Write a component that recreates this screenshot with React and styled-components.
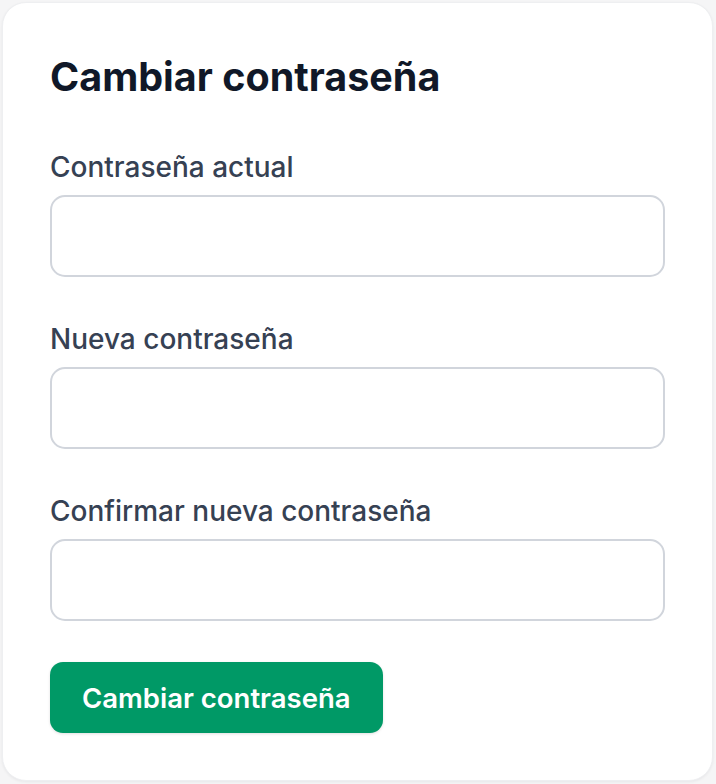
import React from "react";
import styled, { createGlobalStyle } from "styled-components";

const Global = createGlobalStyle`
  html, body { margin: 0; padding: 0; }
  body {
    background: #f5f5f6;
    font-family: Inter, "Noto Sans", sans-serif;
    -webkit-font-smoothing: antialiased;
  }
  * { box-sizing: border-box; }
`;

const Page = styled.div`
  padding: 2px 3px 3px 2px;
  width: 716px;
  height: 784px;
`;

const Card = styled.form`
  background: #ffffff;
  border-radius: 24px;
  border: 1px solid #eeeff1;
  box-shadow: 0 1px 3px rgba(16, 24, 40, 0.06);
  padding: 47px;
  height: 779px;
  display: flex;
  flex-direction: column;
`;

const Title = styled.h2`
  margin: 3px 0 48px;
  font-size: 39.5px;
  line-height: 48px;
  font-weight: 700;
  color: #101828;
`;

const Fields = styled.div`
  display: flex;
  flex-direction: column;
  gap: 44px;
`;

const Field = styled.div`
  display: flex;
  flex-direction: column;
  gap: 10px;
`;

const Label = styled.label`
  font-size: 28px;
  line-height: 36px;
  font-weight: 500;
  color: #364153;
`;

const Input = styled.input`
  height: 82px;
  width: 100%;
  border: 2px solid #d1d5dc;
  border-radius: 15px;
  background: #fff;
  padding: 0 20px;
  font-size: 24px;
  font-family: inherit;
  outline: none;
`;

const Button = styled.button`
  margin-top: 41px;
  align-self: flex-start;
  height: 71px;
  padding: 0 32px;
  border: none;
  border-radius: 13px;
  background: #009966;
  color: #ffffff;
  font-family: inherit;
  font-size: 27.5px;
  font-weight: 600;
  box-shadow: 0 1px 3px rgba(0, 0, 0, 0.12);
  cursor: pointer;
`;

const fields = [
  { id: "current", label: "Contraseña actual" },
  { id: "new", label: "Nueva contraseña" },
  { id: "confirm", label: "Confirmar nueva contraseña" },
];

export default function App() {
  return (
    <>
      <Global />
      <Page>
        <Card onSubmit={(e) => e.preventDefault()}>
          <Title>Cambiar contraseña</Title>
          <Fields>
            {fields.map((f) => (
              <Field key={f.id}>
                <Label htmlFor={f.id}>{f.label}</Label>
                <Input id={f.id} type="password" />
              </Field>
            ))}
          </Fields>
          <Button type="submit">Cambiar contraseña</Button>
        </Card>
      </Page>
    </>
  );
}
